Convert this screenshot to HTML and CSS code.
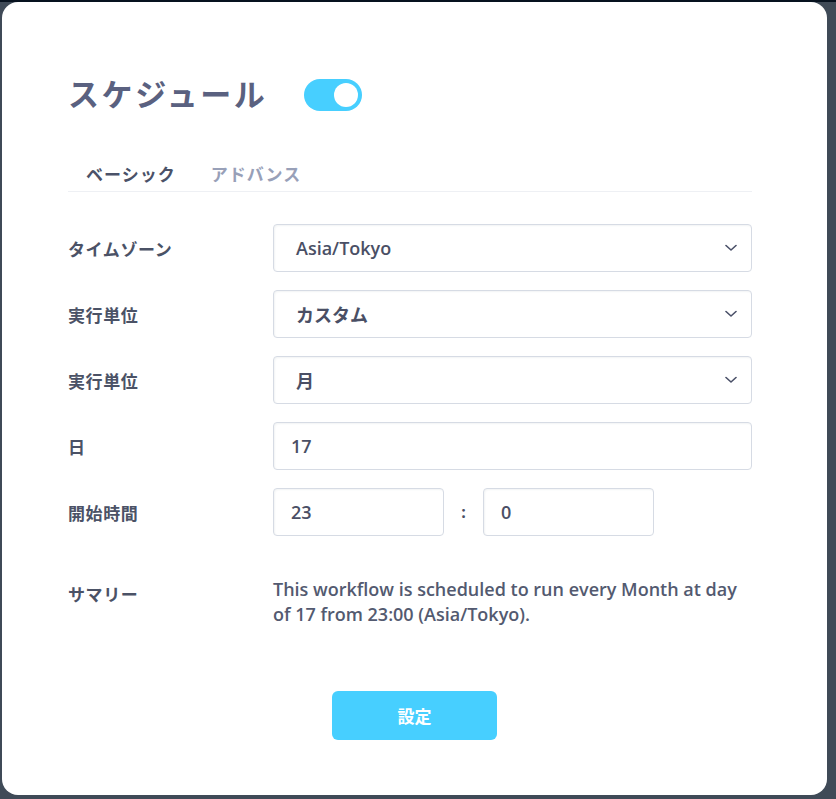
FILE: index.html
```html
<!DOCTYPE html>
<html lang="ja">
<head>
<meta charset="utf-8">
<link rel="stylesheet" href="styles.css">
</head>
<body>
<div class="modal">
  <div class="header">
    <h1 class="title">スケジュール</h1>
    <div class="toggle"><span class="knob"></span></div>
  </div>
  <div class="tabs">
    <div class="tab active">ベーシック</div>
    <div class="tab">アドバンス</div>
  </div>
  <div class="form">
    <div class="row">
      <div class="label">タイムゾーン</div>
      <div class="field select"><span>Asia/Tokyo</span><svg class="chev" viewBox="0 0 12 8" width="12" height="8"><path d="M1 1.5 L6 6 L11 1.5" fill="none" stroke="#4a5068" stroke-width="1.6" stroke-linecap="round" stroke-linejoin="round"/></svg></div>
    </div>
    <div class="row">
      <div class="label">実行単位</div>
      <div class="field select"><span>カスタム</span><svg class="chev" viewBox="0 0 12 8" width="12" height="8"><path d="M1 1.5 L6 6 L11 1.5" fill="none" stroke="#4a5068" stroke-width="1.6" stroke-linecap="round" stroke-linejoin="round"/></svg></div>
    </div>
    <div class="row">
      <div class="label">実行単位</div>
      <div class="field select"><span>月</span><svg class="chev" viewBox="0 0 12 8" width="12" height="8"><path d="M1 1.5 L6 6 L11 1.5" fill="none" stroke="#4a5068" stroke-width="1.6" stroke-linecap="round" stroke-linejoin="round"/></svg></div>
    </div>
    <div class="row">
      <div class="label">日</div>
      <div class="field text"><span>17</span></div>
    </div>
    <div class="row">
      <div class="label">開始時間</div>
      <div class="time">
        <div class="field small"><span>23</span></div>
        <div class="colon">:</div>
        <div class="field small"><span>0</span></div>
      </div>
    </div>
    <div class="row summary-row">
      <div class="label">サマリー</div>
      <div class="summary">This workflow is scheduled to run every Month at day of 17 from 23:00 (Asia/Tokyo).</div>
    </div>
  </div>
  <div class="actions">
    <button class="btn">設定</button>
  </div>
</div>
</body>
</html>
```
FILE: styles.css
```css
html, body { margin: 0; padding: 0; }
body {
  width: 836px;
  height: 799px;
  background: #3f4a57;
  border-top: 2px solid #07121f;
  box-sizing: border-box;
  padding-left: 2px;
  font-family: "Open Sans", "Noto Sans CJK JP", sans-serif;
  overflow: hidden;
}
.modal {
  width: 825px;
  height: 793px;
  background: #ffffff;
  border-radius: 16px;
  box-sizing: border-box;
  padding: 76px 75px 0 66px;
}
.header {
  display: flex;
  align-items: center;
  gap: 37px;
  height: 34px;
}
.title {
  margin: 0;
  font-family: "Noto Sans CJK JP", sans-serif;
  font-size: 31px;
  font-weight: 700;
  color: #5a6180;
  letter-spacing: 2.6px;
  line-height: 32px;
  margin-top: -5px;
}
.toggle {
  width: 58px;
  height: 32px;
  background: #47cfff;
  border-radius: 16px;
  position: relative;
}
.knob {
  position: absolute;
  right: 4px;
  top: 4px;
  width: 24px;
  height: 24px;
  border-radius: 50%;
  background: #fff;
}
.tabs {
  margin-top: 46px;
  display: flex;
  border-bottom: 1px solid #eef0f4;
  height: 34px;
  box-sizing: border-box;
}
.tab {
  font-family: "Noto Sans CJK JP", sans-serif;
  font-size: 17px;
  font-weight: 700;
  color: #98a0b8;
  padding: 0 17px 0 18px;
  line-height: 22px;
  padding-top: 5px;
  letter-spacing: 1px;
}
.tab.active { color: #4b5268; }
.form {
  margin-top: 32px;
  display: flex;
  flex-direction: column;
  gap: 18px;
}
.row {
  display: flex;
  align-items: center;
}
.label {
  width: 205px;
  flex: none;
  font-family: "Noto Sans CJK JP", sans-serif;
  font-size: 17px;
  font-weight: 700;
  color: #4b5266;
  letter-spacing: 0.6px;
}
.field {
  flex: 1;
  height: 48px;
  box-sizing: border-box;
  border: 1px solid #d6dbe4;
  border-radius: 4px;
  box-shadow: inset 1px 1px 2px rgba(40, 60, 90, 0.06);
  display: flex;
  align-items: center;
  padding: 0 14px 0 22px;
  font-size: 18px;
  color: #4a4f65;
  font-family: "Open Sans", "Noto Sans CJK JP", sans-serif;
  font-weight: 600;
}
.field.text { padding-left: 17px; }
.field span { flex: 1; }
.chev { flex: none; }
.time {
  display: flex;
  align-items: center;
  flex: 1;
}
.field.small {
  flex: none;
  width: 171px;
  padding-left: 17px;
}
.colon {
  width: 39px;
  text-align: center;
  color: #4a4f65;
  font-size: 16px;
  font-weight: 700;
}
.summary-row {
  margin-top: 23px;
  align-items: flex-start;
}
.summary-row .label { padding-top: 4px; }
.summary {
  flex: 1;
  font-size: 18px;
  line-height: 25px;
  color: #535a70;
  font-weight: 600;
  margin-top: 0;
}
.actions {
  display: flex;
  justify-content: center;
  margin-top: 64px;
  padding-left: 9px;
}
.btn {
  width: 165px;
  height: 49px;
  border: none;
  border-radius: 6px;
  background: #47cfff;
  color: #fff;
  font-family: "Noto Sans CJK JP", sans-serif;
  font-size: 17px;
  font-weight: 700;
}
```
